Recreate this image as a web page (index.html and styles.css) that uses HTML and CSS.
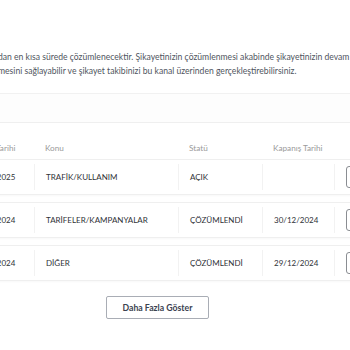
FILE: index.html
```html
<!DOCTYPE html>
<html lang="tr">
<head>
<meta charset="utf-8">
<link rel="stylesheet" href="styles.css">
</head>
<body>
<main class="page">
  <p class="intro">
    <span class="line">dan en kısa sürede çözümlenecektir. Şikayetinizin çözümlenmesi akabinde şikayetinizin devam</span>
    <span class="line">mesini sağlayabilir ve şikayet takibinizi bu kanal üzerinden gerçekleştirebilirsiniz.</span>
  </p>
  <div class="band"></div>
  <div class="table">
    <div class="thead grid">
      <div class="th th-first">Başvuru Tarihi</div>
      <div class="th">Konu</div>
      <div class="th">Statü</div>
      <div class="th">Kapanış Tarihi</div>
      <div class="th"></div>
    </div>
    <div class="trow grid">
      <div class="td">02/01/2025</div>
      <div class="td">TRAFİK/KULLANIM</div>
      <div class="td">AÇIK</div>
      <div class="td"></div>
      <div class="td act"><button class="detail">Detay</button></div>
    </div>
    <div class="trow grid">
      <div class="td">27/12/2024</div>
      <div class="td">TARİFELER/KAMPANYALAR</div>
      <div class="td">ÇÖZÜMLENDİ</div>
      <div class="td">30/12/2024</div>
      <div class="td act"><button class="detail">Detay</button></div>
    </div>
    <div class="trow grid">
      <div class="td">26/12/2024</div>
      <div class="td">DİĞER</div>
      <div class="td">ÇÖZÜMLENDİ</div>
      <div class="td">29/12/2024</div>
      <div class="td act"><button class="detail">Detay</button></div>
    </div>
  </div>
  <div class="more"><button class="more-btn">Daha Fazla Göster</button></div>
</main>
</body>
</html>
```
FILE: styles.css
```css
html, body {
  margin: 0;
  padding: 0;
  background: #ffffff;
  overflow: hidden;
  width: 350px;
  height: 350px;
}
body {
  font-family: "Lato", "Noto Sans", sans-serif;
  color: #333;
}
.page {
  padding-top: 50px;
}
.intro {
  margin: 0 0 0 -2px;
  font-size: 8.6px;
  line-height: 14px;
  color: #4f5560;
}
.line {
  display: block;
  white-space: nowrap;
}
.band {
  margin-top: 15px;
  height: 28px;
  border-top: 1px solid #f1f1f1;
  border-bottom: 1px solid #efefef;
  background: #fdfdfd;
}
.table {
  margin-left: -41px;
  width: 480px;
  display: flex;
  flex-direction: column;
  gap: 7px;
}
.grid {
  display: grid;
  grid-template-columns: 74px 144px 84px 72px 100px;
}
.thead {
  margin-top: 13px;
  height: 23px;
  align-items: center;
  margin-bottom: -7px;
}
.th {
  font-size: 8.2px;
  color: #9a9a9a;
  padding-left: 12px;
  white-space: nowrap;
}
.th-first {
  padding-left: 6px;
}
.trow {
  height: 36px;
  box-sizing: border-box;
  border: 1px solid #efefef;
  border-radius: 2px;
  padding: 4px 0;
  box-shadow: 0 1px 2px rgba(0,0,0,0.03);
}
.td {
  display: flex;
  align-items: center;
  padding-left: 11px;
  font-size: 8px;
  color: #2f3237;
  white-space: nowrap;
  border-left: 1px solid #f2f2f2;
}
.td:first-child {
  border-left: none;
}
.act {
  padding-left: 11px;
}
.detail {
  height: 22px;
  width: 70px;
  border: 1px solid #8a8d92;
  border-radius: 3px;
  background: #fff;
  font-family: inherit;
  font-size: 8px;
  color: #333;
}
.more {
  display: flex;
  padding-left: 106px;
  margin-top: 15px;
}
.more-btn {
  width: 103px;
  height: 23px;
  border: 1px solid #a9adb5;
  border-radius: 2px;
  background: #fff;
  font-family: inherit;
  font-weight: 700;
  font-size: 8.7px;
  color: #3b4250;
}
```
